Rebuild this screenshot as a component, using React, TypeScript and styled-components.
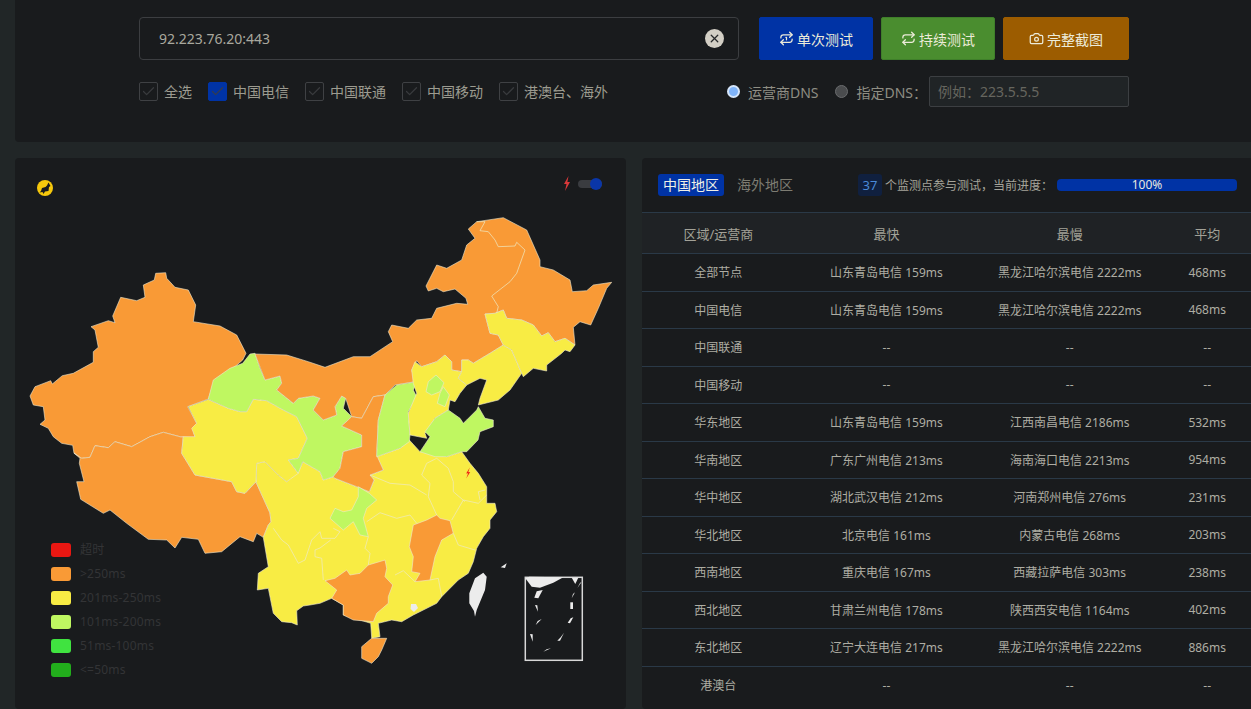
import styled, { createGlobalStyle } from "styled-components";
import { Repeat, Repeat1, Camera, X, Check } from "lucide-react";

const GlobalStyle = createGlobalStyle`
  html, body {
    margin: 0;
    height: 100%;
    overflow: hidden;
    background: #212627;
  }
  body, input {
    font-family: "Noto Sans", "Noto Sans CJK SC", sans-serif;
  }
`;

const ORANGE = "#f99a36";
const YELLOW = "#f8ec44";
const LIME = "#bff761";

const legend = [
  { color: "#e91712", label: "超时" },
  { color: ORANGE, label: ">250ms" },
  { color: YELLOW, label: "201ms-250ms" },
  { color: LIME, label: "101ms-200ms" },
  { color: "#40e340", label: "51ms-100ms" },
  { color: "#22ae1c", label: "<=50ms" },
];

const rows = [
  ["全部节点", "山东青岛电信 159ms", "黑龙江哈尔滨电信 2222ms", "468ms"],
  ["中国电信", "山东青岛电信 159ms", "黑龙江哈尔滨电信 2222ms", "468ms"],
  ["中国联通", "--", "--", "--"],
  ["中国移动", "--", "--", "--"],
  ["华东地区", "山东青岛电信 159ms", "江西南昌电信 2186ms", "532ms"],
  ["华南地区", "广东广州电信 213ms", "海南海口电信 2213ms", "954ms"],
  ["华中地区", "湖北武汉电信 212ms", "河南郑州电信 276ms", "231ms"],
  ["华北地区", "北京电信 161ms", "内蒙古电信 268ms", "203ms"],
  ["西南地区", "重庆电信 167ms", "西藏拉萨电信 303ms", "238ms"],
  ["西北地区", "甘肃兰州电信 178ms", "陕西西安电信 1164ms", "402ms"],
  ["东北地区", "辽宁大连电信 217ms", "黑龙江哈尔滨电信 2222ms", "886ms"],
  ["港澳台", "--", "--", "--"],
];

const carriers = [
  { label: "全选", active: false },
  { label: "中国电信", active: true },
  { label: "中国联通", active: false },
  { label: "中国移动", active: false },
  { label: "港澳台、海外", active: false },
];

// 省份轮廓，坐标和截图页面坐标一致
const provinces = [
  {
    fill: ORANGE,
    d: "M155.7 273.3L165.7 272.7L166.7 278.3L175 287.3L188.3 290L195.7 305L193.3 321.7L220 326L236.7 335L246 353.3L242.7 360L235 366.7L223.3 375L215 380L208.3 399L187.7 406.7L197.7 425L193.3 430L195 437.7L181 437L163.3 432.3L150 436.7L131.7 446.7L115 441.7L108.3 447.7L95 445.7L90 457.3L81.7 458.3L74 453.3L72.7 445.3L61.7 443.3L53.3 436.7L48.3 428.3L40 424.3L45 420L43.3 406.7L33.3 405L30 396L35 386.7L50.7 380.7L52.3 384L62.3 375.7L73.3 373.3L93.3 362.3L93.3 351.7L98.3 347.3L95 330L91 326.7L108.3 320.7L115 322.7L112.7 316L120.7 297.3L136.7 300.7L145 297.3L143.3 285L154.3 280Z",
  },
  {
    fill: ORANGE,
    d: "M181 437L163.3 432.3L150 436.7L131.7 446.7L115 441.7L108.3 447.7L95 445.7L90 457.3L81.7 458.3L74 453L80 458.3L79.3 463.3L84 481.7L76.7 481.7L80.7 499.3L103.3 513.3L110 510L126.7 523.3L148.3 539.3L166.7 540L175 548L181.7 537.3L198.3 539.3L205 553.3L221.7 551.7L240 536.7L253.3 541.7L256.7 533.3L263.3 537.3L268.3 525L271 521.7L270 513L256 482L245 493.3L236.7 491.7L231.7 481.7L195 475L181.7 453.3L183.3 436.7Z",
  },
  {
    fill: YELLOW,
    d: "M376.7 456.7L400 448.3L409.3 440L420 451.7L446.7 456.7L461.7 451.7L470 463.3L478.3 473.3L486.7 486.7L486.7 503.3L495 503.3L496.7 511.7L490 520L490 528.3L483.3 536.7L476.7 548.3L473.3 561.7L468.3 573.3L458.3 580L441.7 596.7L436.7 603.3L413.3 615L401.7 621.7L391.7 620L378.3 623.3L380 636.7L371.7 638.3L370.7 623.3L343.3 615L343.3 605L331.7 598.3L320 603.3L310 605L303.3 606L296.7 610.7L297.3 625L291.7 622.7L281.7 621.7L273.3 613.3L268.3 588.3L257.3 590L258.3 573.3L268.3 566.7L263.3 537.3L268.3 525L271 521.7L270 513L256 482L256.7 463.3L265 461.7L278.3 475L286.7 481.7L298.3 471.7L303 461.7L320 471.7L323.3 480L333.3 476.7L335 478.3L356.7 486.7L369.3 491.7L374 480L370 475L383.3 470Z",
  },
  {
    fill: YELLOW,
    d: "M188.3 406.7L208.3 399.5L228.3 408.3L240 411.7L246.7 411.7L253.3 399.3L266.7 400.7L283.3 410L296.7 416.7L307.3 438.3L298.3 458.3L288.3 460L298.3 473.3L286.7 481.7L278.3 475L265 461.7L256.7 463.3L256 481.7L245 493.3L236.7 491.7L231.7 481.7L195 475L181.7 453.3L183.3 436.7L195 436.7L191.7 428.3L196.7 423.3Z",
  },
  {
    fill: LIME,
    d: "M208.3 399.3L213.3 380L230 368.3L242.7 363.3L250 354L255 353.3L260 368.3L265 380L280 376L281.7 383.3L276.7 390L293.3 403.3L298.3 398.3L313.3 396L320 398.3L313.3 410L323.3 420L336.7 415L335 406.7L341.7 396L345.7 398.3L343.3 408.3L351.7 416.7L341.7 426L361.7 435L361.7 446.7L343.3 451.7L340 468.3L333.3 476.7L323.3 480L320 471.7L308.3 465L302.7 461.7L298.3 473.3L288.3 460L298.3 458.3L307.3 438.3L296.7 416.7L283.3 410L266.7 400.7L253.3 399.3L246.7 411.7L240 411.7L228.3 408.3Z",
  },
  {
    fill: ORANGE,
    d: "M255 354L286.7 355L308.3 361.7L325 367.3L353.3 356.7L370 356.7L392.7 341.7L388.3 331.7L391.7 325L408.3 328.3L416.7 320L431.7 318.3L436.7 308.3L456.7 303.3L467.7 304.3L466 298.3L455 289L443.3 291.7L436.7 288.3L428.3 291L426 286L436.7 265L446.7 268.3L461.7 260L466.7 245L475 238.3L468.3 229L476.7 221.7L503.3 217.7L526.7 230L540 260L540 266.7L553.3 270L570 280L572.3 291.7L586.7 290.7L593.3 285L611.7 282.3L606.7 288.3L598.3 308.3L590.7 325L580 321.7L573.3 327.3L575 345L565 338.3L555 341.7L548.3 332.7L541.7 336L533.3 325L521.7 320L506.7 318.3L503.3 310L495 313.3L485 314L490 333.3L498.3 335L503.3 345L490 353.3L473.3 363.3L468.3 360L461.7 360L461.7 371.7L451.7 370L451.7 361.7L445 355L436.7 361.7L421.7 366.7L416.7 360.7L411.7 370L415 381.7L395 385L385 395L373.3 396.7L361.7 418.3L351.7 416.7L345.7 398.3L341.7 396L335 406.7L336.7 415L323.3 420L313.3 410L320 398.3L313.3 396L298.3 398.3L293.3 403.3L276.7 390L281.7 383.3L280 376L265 380Z",
  },
  {
    fill: ORANGE,
    d: "M385 395L378.3 420L376.7 455L383.3 470L370 475L374 480L369.3 491.7L356.7 486.7L335 478.3L333.3 476.7L340 468.3L343.3 451.7L361.7 446.7L361.7 435L341.7 426L351.7 416.7L361.7 418.3L373.3 396.7Z",
  },
  {
    fill: LIME,
    d: "M385 395L396.7 385L416.7 381.7L413.3 390L416.7 396.7L408.3 411.7L410 435L409.3 441.7L400 448.3L376.7 456.7L378.3 420Z",
  },
  {
    fill: YELLOW,
    d: "M415 361.7L421.7 366.7L436.7 361.7L445 355L451.7 361.7L451.7 370L461.7 371.7L458.3 378.3L466.7 385L460 393.3L455 401.7L450 400L448.3 410L435 418.3L425 433.3L426.7 438.3L410 435L408.3 413.3L416.7 393.3L413.3 383.3L411.7 370Z",
  },
  {
    fill: LIME,
    d: "M436 375L444 382.7L440 391.7L431.7 395L426 391.7L428.3 381.7Z",
  },
  {
    fill: LIME,
    d: "M443.3 386.7L449.3 395L445 406.7L437.3 403.3L440 393.3Z",
  },
  {
    fill: YELLOW,
    d: "M503.3 345L511.7 350L521.7 373.3L510 390L498.3 400L478.3 405L480 398.3L486.7 380L480 378.3L466.7 385L458.3 378.3L461.7 371.7L461.7 360L468.3 360L473.3 363.3L490 353.3Z",
  },
  {
    fill: YELLOW,
    d: "M485 314L495 313.3L503.3 310L506.7 318.3L521.7 320L533.3 325L541.7 336L548.3 332.7L555 341.7L565 338.3L575 345L570 351.7L565 350L561.7 353.3L546.7 365L546.7 371L533.3 368.3L523.3 376.7L521.7 373.3L511.7 350L503.3 345L498.3 335L490 333.3Z",
  },
  {
    fill: LIME,
    d: "M478.3 406.7L485 418.3L493.3 420L493.3 426.7L480 431.7L478 440L466.7 451.7L461.7 451.7L446.7 456.7L435 456.7L420 451.7L430 436.7L425 431.7L435 418.3L448.3 410L460 418.3L463.3 423.3L466.7 420L476.7 410Z",
  },
  {
    fill: LIME,
    d: "M358.3 486.7L369.3 493.3L376.7 500L366.7 508.3L363.3 518.3L368.3 536.7L360 535L353.3 521.7L343.3 530L330 518.3L335 508.3L343.3 511.7L351.7 510L358.3 496.7Z",
  },
  {
    fill: ORANGE,
    d: "M436.7 515L440 518.3L450 520.7L453.3 533.3L441.7 540L435 556.7L430 580L415 581.7L420 573.3L411.7 571.7L413.3 556.7L409.3 546.7L413.3 525L426.7 520Z",
  },
  {
    fill: ORANGE,
    d: "M325 580.7L335 578.3L346.7 570L350 575L360 573.3L368.3 565L385 560L386.7 568.3L385 576.7L392.7 585L388.3 596.7L388.3 603.3L376.7 613.3L373.3 621.7L353.3 620L343.3 615L343.3 605L331.7 598.3L336.7 590L333.3 587.3Z",
  },
  {
    fill: ORANGE,
    d: "M371.7 638.3L386.7 638.3L381.7 650L378.3 656.7L371.7 663.3L361.7 658.3L361.7 646.7Z",
  },
];

// 省界线
const borders = [
  "M476.7 221.7L485 221.7L480 230.7L488.3 231.7L495 240L498.3 246.7L515 246L516.7 242.3L525 250L516.7 273.3L510 281.7L491.7 296L498.3 306.7L496.7 313",
  "M273.3 528.3L281.7 540L288.3 545L298.3 563.3L305 560L311.7 540L320 531.7L321.7 538.3L335 538.3L340 531.7L333.3 528.3",
  "M330.7 540L320 548L315 550L315 556.7L321.7 558.3L323.3 580",
  "M368.3 536.7L365 548.3L370 553.3L368.3 565",
  "M366.7 521.7L380 512.7L396.7 518.3L410 515L416.7 523.3",
  "M395 575L403.3 570.7L415 581.7",
  "M430 580L438.3 578.3L441.7 596.7",
  "M453.3 533.3L458.3 545L475 550",
  "M463.3 500L451.7 520",
  "M463.3 500L478.3 503.3L486.7 495",
  "M436.7 458.3L426.7 463.3L421.7 475L430 483.3L428.3 496.7L436.7 515",
  "M436.7 458.3L448.3 468.3L453.3 481.7L453.3 491.7L465 501.7",
  "M480 500L478.3 491.7L485 490",
  "M370 475L390 483.3L410 485L426.7 495",
];

const islands = [
  "M483.3 572.7L486.7 576.7L485 590L476.7 610L475 616.7L474 611L469.3 603.3L469.3 593.3L475 578.3Z",
  "M500.7 567.3L506.7 563.3L505 568Z",
  "M411 604L416 604L418 608L414 612L410.5 609Z",
];

const insetShapes = [
  "M525.3 578.3L529.3 576.7L563.3 577.3L553.3 582.7L540 587.7L531.7 586.7Z",
  "M571.7 577.7L578.3 577.7L575.3 584Z",
  "M581.7 581.7L577.3 588.3L580 583Z",
  "M542.7 590L538.3 598.3L534.3 597.7L536.7 591.3Z",
  "M575 592.3L571.7 598.3L573 594Z",
  "M570.3 602.3L573 602.3L573 609L570.3 609Z",
  "M535 605L537.3 605.3L538 611.7Z",
  "M541.7 619L535.7 625L537.7 621Z",
  "M573.3 617.3L570 623.3L567.7 622.7L570.7 618.3Z",
  "M530 634L532.7 634.3L532.7 641.7Z",
  "M564 632.7L560 640.7L557.3 640.7L560.7 637.3Z",
  "M551 648.3L543.3 651.7L546.7 649.3Z",
];

function Bolt({ x, y, size }: { x: number; y: number; size: number }) {
  const s = size / 12;
  return (
    <path
      d={`M${x + 2 * s} ${y - 6 * s}L${x - 2 * s} ${y + 0.5 * s}L${x + 0.2 * s} ${y + 0.2 * s}L${x - 2 * s} ${y + 6 * s}L${x + 2.4 * s} ${y - 1 * s}L${x + 0.2 * s} ${y - 0.8 * s}Z`}
      fill="#f01a14"
    />
  );
}

function ChinaMap() {
  return (
    <MapCanvas viewBox="15 158 611 551">
      {provinces.map((p, index) => (
        <path key={index} d={p.d} fill={p.fill} stroke="#eee9d0" strokeWidth={0.6} strokeLinejoin="round" />
      ))}
      {borders.map((d, index) => (
        <path key={index} d={d} fill="none" stroke="#eee9c4" strokeWidth={0.7} />
      ))}
      {islands.map((d, index) => (
        <path key={index} d={d} fill="#ececec" />
      ))}
      <rect x={525.3} y={577.3} width={57} height={83} fill="none" stroke="#d8d8d8" strokeWidth={1.5} />
      {insetShapes.map((d, index) => (
        <path key={index} d={d} fill="#ececec" />
      ))}
      <Bolt x={468} y={473} size={11} />
    </MapCanvas>
  );
}

export default function App() {
  return (
    <>
      <GlobalStyle />
      <Page>
        <TopPanel>
          <SearchRow>
            <HostBox>
              <HostInput defaultValue="92.223.76.20:443" />
              <ClearButton>
                <X size={13} strokeWidth={2.4} />
              </ClearButton>
            </HostBox>
            <ActionButton $bg="#0033a5" $width={114}>
              <Repeat1 size={15} />
              单次测试
            </ActionButton>
            <ActionButton $bg="#4a8d2f" $border="#3f7f2a" $width={114}>
              <Repeat size={15} />
              持续测试
            </ActionButton>
            <ActionButton $bg="#9c5c00" $width={126}>
              <Camera size={15} />
              完整截图
            </ActionButton>
          </SearchRow>
          <OptionRow>
            <Carriers>
              {carriers.map((item) => (
                <Carrier key={item.label}>
                  <CheckBox $active={item.active}>
                    <Check size={15} strokeWidth={2} />
                  </CheckBox>
                  {item.label}
                </Carrier>
              ))}
            </Carriers>
            <DnsGroup>
              <Radio $active />
              <DnsLabel>运营商DNS</DnsLabel>
              <Radio />
              <DnsLabel>指定DNS：</DnsLabel>
              <DnsInput placeholder="例如：223.5.5.5" />
            </DnsGroup>
          </OptionRow>
        </TopPanel>

        <Content>
          <MapPanel>
            <ChinaMap />
            <MapHead>
              <Logo viewBox="0 0 18 18">
                <circle cx={9} cy={9} r={8} fill="#f6c80c" />
                <path
                  d="M12.5 3.5L11 6.5L9.5 8L6 9L5 12L3.5 13.5L6.5 13L7.5 15L9 12.5L12.5 12L13 8L14.5 7Z"
                  fill="#191b1d"
                />
              </Logo>
              <FlashSwitch>
                <svg width={8} height={15} viewBox="0 0 8 15">
                  <path d="M5.5 0L1 8L3.5 8L2 15L7 6L4.4 6Z" fill="#d9393a" />
                </svg>
                <Track>
                  <Knob />
                </Track>
              </FlashSwitch>
            </MapHead>
            <Legend>
              {legend.map((item) => (
                <LegendItem key={item.label}>
                  <Swatch $color={item.color} />
                  <LegendLabel>{item.label}</LegendLabel>
                </LegendItem>
              ))}
            </Legend>
          </MapPanel>

          <TablePanel>
            <TableHead>
              <Tab $active>中国地区</Tab>
              <Tab>海外地区</Tab>
              <Count>37</Count>
              <ProgressText>个监测点参与测试，当前进度：</ProgressText>
              <Progress>100%</Progress>
            </TableHead>
            <Table>
              <thead>
                <tr>
                  <Th $width={25}>区域/运营商</Th>
                  <Th $width={30}>最快</Th>
                  <Th $width={30}>最慢</Th>
                  <Th $width={15}>平均</Th>
                </tr>
              </thead>
              <tbody>
                {rows.map((row) => (
                  <tr key={row[0]}>
                    {row.map((cell, index) => (
                      <Td key={index}>{cell}</Td>
                    ))}
                  </tr>
                ))}
              </tbody>
            </Table>
          </TablePanel>
        </Content>
      </Page>
    </>
  );
}

const Page = styled.div`
  width: 1253px;
  height: 709px;
  padding: 0 0 0 15px;
  box-sizing: border-box;
  overflow: hidden;
`;

const TopPanel = styled.section`
  box-sizing: border-box;
  width: 1238px;
  height: 142px;
  padding: 17px 0 0 124px;
  background: #191b1d;
  border-radius: 0 0 4px 4px;
`;

const SearchRow = styled.div`
  display: flex;
  align-items: stretch;
  gap: 8px;
  height: 43px;
`;

const HostBox = styled.div`
  box-sizing: border-box;
  display: flex;
  align-items: center;
  justify-content: space-between;
  width: 600px;
  margin-right: 12px;
  padding: 0 14px 0 19px;
  border: 1px solid #3c3e41;
  border-radius: 4px;
`;

const HostInput = styled.input`
  flex: 1;
  border: 0;
  outline: 0;
  padding: 0;
  background: transparent;
  color: #a9a89e;
  font-size: 14px;
`;

const ClearButton = styled.span`
  display: flex;
  align-items: center;
  justify-content: center;
  width: 19px;
  height: 19px;
  border-radius: 50%;
  background: #d3cfc5;
  color: #26282a;
`;

const ActionButton = styled.button<{ $bg: string; $border?: string; $width: number }>`
  box-sizing: border-box;
  display: flex;
  align-items: center;
  justify-content: center;
  gap: 3px;
  width: ${(p) => p.$width}px;
  padding: 0;
  border: 1px solid ${(p) => p.$border ?? p.$bg};
  border-radius: 2px;
  background: ${(p) => p.$bg};
  color: #ecebd9;
  font-family: inherit;
  font-size: 14px;
`;

const OptionRow = styled.div`
  display: flex;
  align-items: center;
  justify-content: space-between;
  width: 990px;
  height: 31px;
  margin-top: 16px;
`;

const Carriers = styled.div`
  display: flex;
  gap: 16px;
`;

const Carrier = styled.label`
  display: flex;
  align-items: center;
  gap: 6px;
  color: #9c9b90;
  font-size: 14px;
  line-height: 19px;
`;

const CheckBox = styled.span<{ $active?: boolean }>`
  box-sizing: border-box;
  display: flex;
  align-items: center;
  justify-content: center;
  width: 19px;
  height: 19px;
  border: 1px solid ${(p) => (p.$active ? "#0033a5" : "#3f4144")};
  border-radius: 2px;
  background: ${(p) => (p.$active ? "#0033a5" : "transparent")};
  color: ${(p) => (p.$active ? "#333c4e" : "#393b3e")};
`;

const DnsGroup = styled.div`
  display: flex;
  align-items: center;
`;

const Radio = styled.span<{ $active?: boolean }>`
  box-sizing: border-box;
  width: 13px;
  height: 13px;
  margin-right: 8px;
  border-radius: 50%;
  border: ${(p) => (p.$active ? "2px solid #d6e6fa" : "1px solid #6a6c6e")};
  background: ${(p) => (p.$active ? "#7fb4fa" : "#4a4c4e")};
`;

const DnsLabel = styled.span`
  margin-right: 17px;
  color: #8f8e84;
  font-size: 14px;
  &:nth-of-type(4) {
    margin-right: 2px;
  }
`;

const DnsInput = styled.input`
  box-sizing: border-box;
  width: 200px;
  height: 31px;
  padding: 0 8px;
  border: 1px solid #3c3f42;
  border-radius: 2px;
  outline: 0;
  background: #202426;
  font-size: 14px;
  &::placeholder {
    color: #66665f;
  }
`;

const Content = styled.div`
  display: grid;
  grid-template-columns: 611px 611px;
  gap: 16px;
  margin-top: 16px;
  height: 551px;
`;

const MapPanel = styled.section`
  position: relative;
  background: #191b1d;
  border-radius: 4px;
`;

const MapCanvas = styled.svg`
  position: absolute;
  inset: 0;
  width: 611px;
  height: 551px;
`;

const MapHead = styled.div`
  position: relative;
  display: flex;
  align-items: flex-start;
  justify-content: space-between;
  padding: 21px 24px 0 21px;
`;

const Logo = styled.svg`
  width: 18px;
  height: 18px;
`;

const FlashSwitch = styled.div`
  display: flex;
  align-items: center;
  gap: 7px;
  margin-top: -3px;
`;

const Track = styled.span`
  position: relative;
  display: block;
  width: 24px;
  height: 8px;
  border-radius: 4px;
  background: #3a3c40;
`;

const Knob = styled.span`
  position: absolute;
  top: -2px;
  right: 0;
  width: 12px;
  height: 12px;
  border-radius: 50%;
  background: #0a36a8;
`;

const Legend = styled.ul`
  position: absolute;
  left: 36px;
  top: 385px;
  display: flex;
  flex-direction: column;
  gap: 10px;
  margin: 0;
  padding: 0;
  list-style: none;
`;

const LegendItem = styled.li`
  display: flex;
  align-items: center;
  gap: 9px;
  height: 14px;
  color: #333436;
  font-size: 12px;
  letter-spacing: 0.2px;
`;

const LegendLabel = styled.span`
  margin-top: -2px;
`;

const Swatch = styled.span<{ $color: string }>`
  width: 20px;
  height: 14px;
  border-radius: 3px;
  background: ${(p) => p.$color};
`;

const TablePanel = styled.section`
  background: #191b1d;
  border-radius: 4px;
  overflow: hidden;
`;

const TableHead = styled.div`
  box-sizing: border-box;
  display: flex;
  align-items: center;
  height: 55px;
  padding: 0 16px;
  border-bottom: 1px solid #2a3947;
`;

const Tab = styled.span<{ $active?: boolean }>`
  flex-shrink: 0;
  padding: 0 5px;
  margin-right: 8px;
  height: 22px;
  line-height: 21px;
  border-radius: 3px;
  background: ${(p) => (p.$active ? "#0033a5" : "transparent")};
  color: ${(p) => (p.$active ? "#f0f0e6" : "#7d7c72")};
  font-size: 14px;
  white-space: nowrap;
`;

const Count = styled.span`
  flex-shrink: 0;
  width: 24px;
  height: 22px;
  margin-left: 52px;
  margin-right: 3px;
  line-height: 22px;
  text-align: center;
  border-radius: 3px;
  background: #10203f;
  color: #4a8ad8;
  font-size: 13px;
`;

const ProgressText = styled.span`
  flex-shrink: 0;
  width: 172px;
  color: #a5a49a;
  font-size: 12px;
  white-space: nowrap;
`;

const Progress = styled.div`
  flex-shrink: 0;
  width: 180px;
  height: 12px;
  line-height: 12px;
  border-radius: 4px;
  background: #0033a5;
  color: #e8e8e0;
  font-size: 12px;
  text-align: center;
`;

const Table = styled.table`
  width: 100%;
  table-layout: fixed;
  border-collapse: collapse;
  text-align: center;
`;

const Th = styled.th<{ $width: number }>`
  width: ${(p) => p.$width}%;
  height: 40px;
  padding: 0;
  background: #1f2225;
  border-bottom: 1px solid #2a3947;
  color: #a3a298;
  font-size: 13px;
  font-weight: 400;
`;

const Td = styled.td`
  height: 37.5px;
  padding: 0;
  box-sizing: border-box;
  border-bottom: 1px solid #2a3947;
  color: #aeada3;
  font-size: 12px;
  tr:last-child & {
    border-bottom: 0;
  }
`;
